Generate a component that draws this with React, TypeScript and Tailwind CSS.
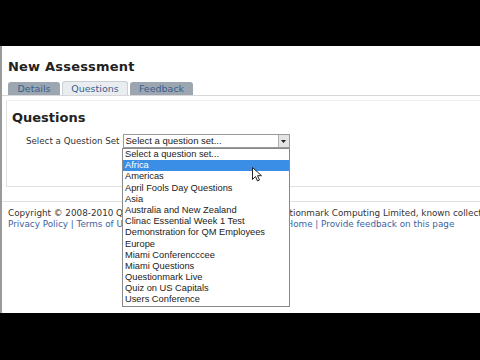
import React from 'react';

const SETS = [
  'Select a question set...',
  'Africa',
  'Americas',
  'April Fools Day Questions',
  'Asia',
  'Australia and New Zealand',
  'Clinac Essential Week 1 Test',
  'Demonstration for QM Employees',
  'Europe',
  'Miami Conferencccee',
  'Miami Questions',
  'Questionmark Live',
  'Quiz on US Capitals',
  'Users Conference',
];

const verdana = { fontFamily: '"DejaVu Sans", Verdana, sans-serif' };
const arial = { fontFamily: '"Liberation Sans", Arial, sans-serif' };

export default function App() {
  return (
    <div className="w-[480px] h-[360px] bg-black flex flex-col overflow-hidden">
      <div className="h-[46px] shrink-0" />
      <div
        className="relative h-[267px] bg-white border-l-2 border-[#9a9a9a] flex flex-col overflow-hidden"
        style={verdana}
      >
        <h1 className="pl-[6px] pt-[13px] text-[13px] font-bold text-[#222] leading-[16px] tracking-[0.2px]">
          New Assessment
        </h1>
        <div className="mt-[7px] flex items-end gap-[2px] pl-[6px] border-b border-[#d8d8d8] h-[14px]">
          <div className="w-[52px] h-[13px] rounded-t-[3px] bg-[#9ca6b0] text-[#3a5e8c] text-[9.5px] leading-[13px] text-center">
            Details
          </div>
          <div className="w-[66px] h-[14px] rounded-t-[3px] bg-[#e9edf0] border border-b-0 border-[#c9cfd4] text-[#3a5e8c] text-[9.5px] leading-[13px] text-center">
            Questions
          </div>
          <div className="w-[63px] h-[13px] rounded-t-[3px] bg-[#9ca6b0] text-[#3a5e8c] text-[9.5px] leading-[13px] text-center">
            Feedback
          </div>
        </div>
        <div className="ml-[4px] h-[87px] border-l border-b border-t border-t-[#f0f0f0] border-[#e0e0e0] mt-[4px] flex flex-col">
          <h2 className="pl-[5px] pt-[9px] text-[13px] font-bold text-[#222] leading-[16px]">Questions</h2>
          <div className="mt-[8px] pl-[19px] flex items-center gap-[3px]">
            <span className="text-[8.7px] text-[#333] leading-[14px]">Select a Question Set</span>
            <div className="relative w-[167px] h-[14px] border border-[#9a9a9a] bg-white flex items-center">
              <span className="pl-[2px] text-[9.5px] text-[#222] leading-[12px]" style={arial}>
                Select a question set...
              </span>
              <div className="absolute right-0 top-0 w-[11px] h-[12px] bg-[#e4e4e4] border-l border-[#b0b0b0] flex items-center justify-center">
                <svg width="5" height="3" viewBox="0 0 5 3">
                  <path d="M0 0h5L2.5 3z" fill="#222" />
                </svg>
              </div>
            </div>
          </div>
        </div>
        <div className="mt-[14px] border-t border-[#e2e2e2] pl-[6px] pt-[6px] text-[8.8px] leading-[11px] whitespace-nowrap">
          <div className="text-[#333]">
            Copyright © 2008-2010 Questionmark Corporation and/or Questionmark Computing Limited, known collectively
            as Questionmark
          </div>
          <div className="text-[#3b62a0]">
            Privacy Policy | Terms of Use | Trademarks | Contact Us | Help | Home | Provide feedback on this page
          </div>
        </div>

        {/* open dropdown list */}
        <div
          className="absolute left-[120px] top-[102px] w-[168px] bg-white border border-[#8a8a8a] flex flex-col"
          style={arial}
        >
          {SETS.map((s, i) => (
            <div
              key={s}
              className={`h-[11.2px] pl-[2px] text-[9.3px] leading-[11px] ${
                i === 1 ? 'bg-[#3a8ee6] text-white' : 'text-[#222]'
              }`}
            >
              {s}
            </div>
          ))}
        </div>

        {/* mouse pointer */}
        <svg className="absolute left-[250px] top-[121px]" width="10" height="15" viewBox="0 0 10 15">
          <path d="M0.5 0.5v12l3-3 2 4.5 2-1-2-4.3h4z" fill="#fff" stroke="#222" strokeWidth="1" />
        </svg>
      </div>
      <div className="flex-1" />
    </div>
  );
}
